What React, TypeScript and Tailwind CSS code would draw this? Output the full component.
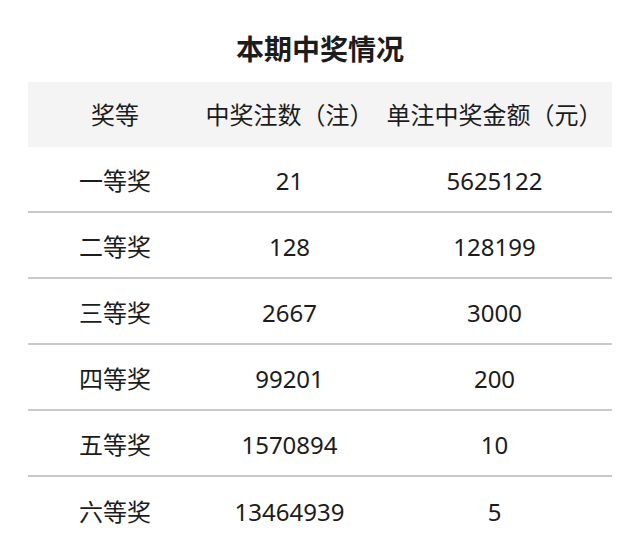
const rows = [
  ["一等奖", "21", "5625122"],
  ["二等奖", "128", "128199"],
  ["三等奖", "2667", "3000"],
  ["四等奖", "99201", "200"],
  ["五等奖", "1570894", "10"],
  ["六等奖", "13464939", "5"],
];

const cols = "grid grid-cols-[174px_175px_235px] items-center text-center";

export default function App() {
  return (
    <div
      className="w-[640px] h-[543px] overflow-hidden bg-white text-[#1c1c1c]"
      style={{ fontFamily: '"Noto Sans", "Noto Sans CJK SC", sans-serif' }}
    >
      <h1 className="pt-[30px] h-[82px] text-center text-[28px] font-bold leading-[38px]">
        本期中奖情况
      </h1>
      <div className="mx-[28px]">
        <div className={`${cols} h-[65px] bg-[#f4f4f4] text-[24px]`}>
          <div>奖等</div>
          <div className="whitespace-nowrap">中奖注数（注）</div>
          <div className="whitespace-nowrap">单注中奖金额（元）</div>
        </div>
        {rows.map((r, i) => (
          <div
            key={r[0]}
            className={`${cols} h-[66px] pt-[3px] text-[24px] ${i < rows.length - 1 ? "border-b-2 border-[#cacaca]" : ""}`}
          >
            <div>{r[0]}</div>
            <div>{r[1]}</div>
            <div>{r[2]}</div>
          </div>
        ))}
      </div>
    </div>
  );
}
